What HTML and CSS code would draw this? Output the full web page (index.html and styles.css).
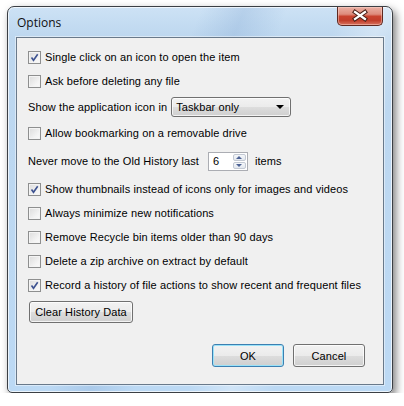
FILE: index.html
```html
<!DOCTYPE html>
<html>
<head>
<meta charset="utf-8">
<link rel="stylesheet" href="styles.css">
</head>
<body>
<div class="desk">
  <div class="win">
    <div class="titlebar">
      <span class="title">Options</span>
      <div class="close">
        <svg width="44" height="18" viewBox="0 0 44 18">
          <path d="M17 5 L27 12 M27 5 L17 12" stroke="#4a1f18" stroke-width="4.2" stroke-linecap="square" fill="none"/>
          <path d="M17 5 L27 12 M27 5 L17 12" stroke="#ffffff" stroke-width="2.2" stroke-linecap="square" fill="none"/>
        </svg>
      </div>
    </div>
    <div class="client">
      <div class="row"><span class="cb on"><svg width="11" height="11" viewBox="0 0 11 11"><path d="M2.5 5.5 L4.5 8.3 L8.7 2.3" stroke="#3d5290" stroke-width="1.6" fill="none"/></svg></span><span>Single click on an icon to open the item</span></div>
      <div class="row"><span class="cb"></span><span>Ask before deleting any file</span></div>
      <div class="row tall">
        <span class="lbl">Show the application icon in</span>
        <div class="combo"><span>Taskbar only</span><span class="arrow"></span></div>
      </div>
      <div class="row"><span class="cb"></span><span>Allow bookmarking on a removable drive</span></div>
      <div class="row spinrow">
        <span class="lbl">Never move to the Old History last</span>
        <div class="spin"><span class="val">6</span><div class="spinbtns"><span class="sb up"></span><span class="sb down"></span></div></div>
        <span class="after">items</span>
      </div>
      <div class="row"><span class="cb on"><svg width="11" height="11" viewBox="0 0 11 11"><path d="M2.5 5.5 L4.5 8.3 L8.7 2.3" stroke="#3d5290" stroke-width="1.6" fill="none"/></svg></span><span>Show thumbnails instead of icons only for images and videos</span></div>
      <div class="row"><span class="cb"></span><span>Always minimize new notifications</span></div>
      <div class="row"><span class="cb"></span><span>Remove Recycle bin items older than 90 days</span></div>
      <div class="row"><span class="cb"></span><span>Delete a zip archive on extract by default</span></div>
      <div class="row"><span class="cb on"><svg width="11" height="11" viewBox="0 0 11 11"><path d="M2.5 5.5 L4.5 8.3 L8.7 2.3" stroke="#3d5290" stroke-width="1.6" fill="none"/></svg></span><span>Record a history of file actions to show recent and frequent files</span></div>
      <button class="btn clear">Clear History Data</button>
      <div class="actions">
        <button class="btn ok">OK</button>
        <button class="btn">Cancel</button>
      </div>
    </div>
  </div>
</div>
</body>
</html>
```
FILE: styles.css
```css
html, body {
  margin: 0;
  background: #ffffff;
}
body {
  font-family: "Liberation Sans", Arial, sans-serif;
  font-size: 11px;
  letter-spacing: 0.1px;
  color: #000;
}
.desk {
  padding: 6px 0 0 7px;
}
.win {
  position: relative;
  box-sizing: border-box;
  width: 386px;
  height: 387px;
  border: 1px solid #3b3f44;
  border-radius: 7px 7px 5px 5px;
  padding: 0 8px 7px 8px;
  background:
    linear-gradient(112deg, rgba(255,255,255,0) 36%, rgba(110,150,200,0.22) 44%, rgba(255,255,255,0) 52%, rgba(255,255,255,0) 62%, rgba(255,255,255,0.3) 70%, rgba(255,255,255,0) 78%),
    linear-gradient(180deg, #cde2f5 0px, #bdd7ef 30px, #bcd9f4 100%);
  box-shadow: 3px 4px 8px rgba(0,0,0,0.5), inset 0 0 0 1px rgba(255,255,255,0.7);
}
.titlebar {
  height: 30px;
  display: flex;
  align-items: center;
  padding-left: 1px;
}
.title {
  font-family: "Open Sans", "Noto Sans", sans-serif;
  font-size: 12px;
  letter-spacing: 0;
  color: #101010;
}
.close {
  position: absolute;
  top: 0;
  right: 9px;
  width: 44px;
  height: 18px;
  border: 1px solid #5e2820;
  border-top: none;
  border-radius: 0 0 5px 5px;
  background: linear-gradient(180deg, #eab0a4 0%, #de8c7c 40%, #c9432f 52%, #c13e2b 75%, #d7735f 100%);
  box-shadow: inset 0 0 0 1px rgba(255,220,210,0.45);
}
.close svg {
  display: block;
}
.client {
  box-sizing: border-box;
  height: 348px;
  border: 1px solid #69798a;
  background: #f0f0f0;
  box-shadow: 0 0 0 1px rgba(255,255,255,0.45);
  display: flex;
  flex-direction: column;
  padding: 7px 0 0 11px;
}
.row {
  height: 24px;
  display: flex;
  align-items: center;
  white-space: nowrap;
}
.row.tall {
  height: 28px;
}
.row.spinrow {
  height: 32px;
}
.cb {
  box-sizing: border-box;
  width: 13px;
  height: 13px;
  border: 1px solid #8e8f8f;
  background: linear-gradient(135deg, #dcdcdc 0%, #f4f4f4 70%, #fafafa 100%);
  box-shadow: inset 0 0 0 1px #f4f4f4;
  margin-right: 4px;
  flex: none;
  display: flex;
  align-items: center;
  justify-content: center;
}
.cb svg {
  display: block;
}
.lbl {
  margin-right: 4px;
}
.spinrow .lbl {
  margin-right: 9px;
}
.combo {
  box-sizing: border-box;
  width: 120px;
  height: 20px;
  border: 1px solid #707070;
  border-radius: 3px;
  background: linear-gradient(180deg, #f2f2f2 0%, #ebebeb 50%, #dddddd 51%, #cfcfcf 100%);
  box-shadow: inset 0 0 0 1px rgba(255,255,255,0.75);
  display: flex;
  align-items: center;
  justify-content: space-between;
  padding: 0 6px 0 4px;
}
.arrow {
  width: 0;
  height: 0;
  border-left: 4px solid transparent;
  border-right: 4px solid transparent;
  border-top: 4px solid #000;
}
.spin {
  box-sizing: border-box;
  width: 40px;
  height: 19px;
  border: 1px solid #abadb3;
  background: #fff;
  display: flex;
  justify-content: space-between;
  padding: 1px;
  margin-right: 7px;
}
.val {
  padding-left: 3px;
  line-height: 15px;
}
.spinbtns {
  width: 13px;
  display: flex;
  flex-direction: column;
  gap: 1px;
}
.sb {
  flex: 1;
  box-sizing: border-box;
  border: 1px solid #c3c9d3;
  background: linear-gradient(180deg, #f5f7fa, #e3e8ef);
  display: flex;
  align-items: center;
  justify-content: center;
  border-radius: 2px;
}
.sb::after {
  content: "";
  width: 0;
  height: 0;
  border-left: 3px solid transparent;
  border-right: 3px solid transparent;
}
.sb.up::after {
  border-bottom: 3px solid #4d6294;
}
.sb.down::after {
  border-top: 3px solid #4d6294;
}
.btn {
  box-sizing: border-box;
  font-family: "Liberation Sans", Arial, sans-serif;
  font-size: 11px;
  letter-spacing: 0.1px;
  color: #000;
  border: 1px solid #707070;
  border-radius: 3px;
  background: linear-gradient(180deg, #f2f2f2 0%, #ebebeb 50%, #dddddd 51%, #cfcfcf 100%);
  box-shadow: inset 0 0 0 1px rgba(255,255,255,0.75);
  padding: 0;
}
.clear {
  align-self: flex-start;
  width: 104px;
  height: 22px;
  margin-top: 4px;
  margin-left: 1px;
}
.actions {
  margin-top: auto;
  align-self: flex-end;
  display: flex;
  gap: 9px;
  margin-right: 18px;
  margin-bottom: 17px;
}
.actions .btn {
  width: 72px;
  height: 23px;
}
.btn.ok {
  border-color: #3c7fb1;
  box-shadow: inset 0 0 0 1px #9ae2f8;
}
```
